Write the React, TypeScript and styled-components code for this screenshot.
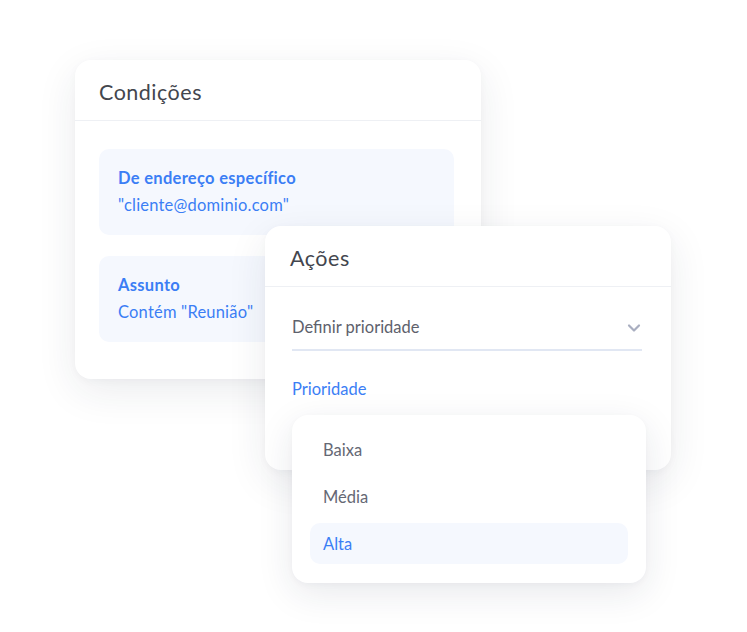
import React from "react";
import styled, { createGlobalStyle } from "styled-components";

const Global = createGlobalStyle`
  html, body { margin: 0; padding: 0; background: #ffffff; }
  body { font-family: Lato, "Noto Sans", sans-serif; -webkit-font-smoothing: antialiased; }
`;

const Stage = styled.div`
  position: relative;
  width: 747px;
  height: 632px;
  overflow: hidden;
  background: #ffffff;
`;

const Card = styled.div<{ $x: number; $y: number; $w: number; $h: number; $z: number }>`
  position: absolute;
  left: ${(p) => p.$x}px;
  top: ${(p) => p.$y}px;
  width: ${(p) => p.$w}px;
  height: ${(p) => p.$h}px;
  z-index: ${(p) => p.$z};
  background: #ffffff;
  border-radius: 16px;
  box-shadow: 0 12px 40px rgba(30, 40, 70, 0.09), 0 2px 8px rgba(30, 40, 70, 0.03);
  display: flex;
  flex-direction: column;
  box-sizing: border-box;
`;

const CardHeader = styled.div<{ $pl: number }>`
  height: 61px;
  box-sizing: border-box;
  padding: 3px ${(p) => p.$pl}px 0;
  display: flex;
  align-items: center;
  border-bottom: 1px solid #eef0f4;
  font-size: 21.5px;
  letter-spacing: 0.5px;
  color: #43464e;
  font-weight: 400;
`;

const CardBody = styled.div<{ $pt: number; $pl: number; $pr: number }>`
  padding: ${(p) => p.$pt}px ${(p) => p.$pr}px 0 ${(p) => p.$pl}px;
  display: flex;
  flex-direction: column;
  gap: 21px;
`;

const Condition = styled.div`
  background: #f5f8fe;
  border-radius: 10px;
  height: 86px;
  box-sizing: border-box;
  padding: 19px 19px 0;
  display: flex;
  flex-direction: column;
  gap: 7px;
`;

const CondTitle = styled.div`
  font-size: 16.5px;
  font-weight: 700;
  letter-spacing: 0.3px;
  color: #3b7ef5;
  line-height: 20px;
`;

const CondValue = styled.div`
  font-size: 16.5px;
  letter-spacing: 0.2px;
  color: #3b7ef5;
  line-height: 20px;
`;

const SelectRow = styled.div`
  display: flex;
  align-items: center;
  justify-content: space-between;
  height: 54px;
  box-sizing: border-box;
  padding-top: 7px;
  border-bottom: 2px solid #e1e7f3;
  font-size: 16.5px;
  color: #5e616c;
`;

const Chevron = styled.svg`
  width: 14px;
  height: 14px;
  margin-right: 1px;
  margin-top: 3px;
`;

const FieldLabel = styled.div`
  margin-top: 7px;
  font-size: 16.5px;
  line-height: 20px;
  color: #3b7ef5;
`;

const Menu = styled.div`
  position: absolute;
  left: 292px;
  top: 415px;
  width: 354px;
  height: 168px;
  z-index: 3;
  background: #ffffff;
  border-radius: 16px;
  box-shadow: 0 10px 36px rgba(30, 40, 70, 0.1), 0 2px 6px rgba(30, 40, 70, 0.03);
  padding: 14px 18px 0 18px;
  box-sizing: border-box;
  display: flex;
  flex-direction: column;
  gap: 6px;
`;

const MenuItem = styled.div<{ $active?: boolean }>`
  height: 41px;
  border-radius: 10px;
  display: flex;
  align-items: center;
  padding: 0 13px;
  font-size: 16.5px;
  color: ${(p) => (p.$active ? "#3b7ef5" : "#656874")};
  background: ${(p) => (p.$active ? "#f5f8fe" : "transparent")};
`;

export default function App() {
  return (
    <>
      <Global />
      <Stage>
        <Card $x={75} $y={60} $w={406} $h={319} $z={1}>
          <CardHeader $pl={24}>Condições</CardHeader>
          <CardBody $pt={28} $pl={24} $pr={27}>
            <Condition>
              <CondTitle>De endereço específico</CondTitle>
              <CondValue>"cliente@dominio.com"</CondValue>
            </Condition>
            <Condition>
              <CondTitle>Assunto</CondTitle>
              <CondValue>Contém "Reunião"</CondValue>
            </Condition>
          </CardBody>
        </Card>
        <Card $x={265} $y={226} $w={406} $h={244} $z={2}>
          <CardHeader $pl={25}>Ações</CardHeader>
          <CardBody $pt={10} $pl={27} $pr={29}>
            <SelectRow>
              <span>Definir prioridade</span>
              <Chevron viewBox="0 0 14 14" fill="none">
                <path d="M2 4.5 L7 9.5 L12 4.5" stroke="#a9aec0" strokeWidth="2.2" strokeLinecap="round" strokeLinejoin="round" />
              </Chevron>
            </SelectRow>
            <FieldLabel>Prioridade</FieldLabel>
          </CardBody>
        </Card>
        <Menu>
          <MenuItem>Baixa</MenuItem>
          <MenuItem>Média</MenuItem>
          <MenuItem $active>Alta</MenuItem>
        </Menu>
      </Stage>
    </>
  );
}
